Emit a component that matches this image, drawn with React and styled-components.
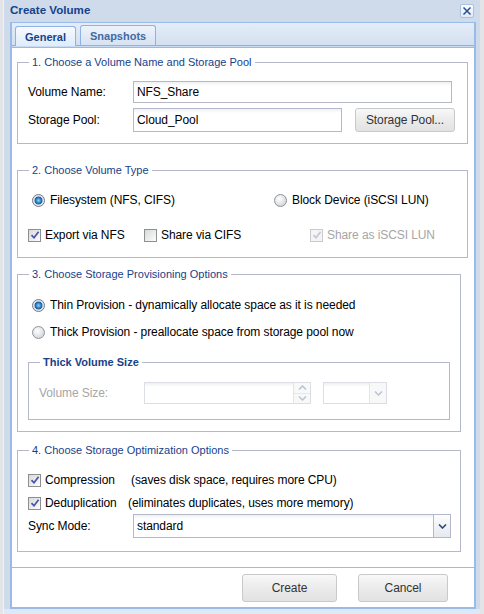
import styled, { createGlobalStyle } from 'styled-components';

const GlobalStyle = createGlobalStyle`
  html, body {
    margin: 0;
    padding: 0;
    background: #e2e4e7;
    overflow: hidden;
  }
  body {
    font-family: "Liberation Sans", Arial, sans-serif;
    font-size: 12px;
    letter-spacing: -0.08px;
    color: #000;
  }
  * { box-sizing: border-box; }
`;

const Window = styled.div`
  margin-left: 3px;
  width: 477px;
  height: 614px;
  display: flex;
  flex-direction: column;
  background: #cfdbea;
  border-left: 1px solid #eef3f9;
`;

const TitleBar = styled.div`
  height: 22px;
  flex: none;
  display: flex;
  align-items: center;
  justify-content: space-between;
  padding: 0 6px 4px 6px;
  font: bold 11.6px "Liberation Sans", Arial, sans-serif;
  letter-spacing: 0;
  color: #15428b;
`;

const CloseBtn = styled.div`
  width: 14px;
  height: 14px;
  margin-top: 3px;
  border: 1px solid #a9c2e2;
  border-radius: 2px;
  background: linear-gradient(#fbfdff, #dfe9f6);
  display: flex;
  align-items: center;
  justify-content: center;
`;

const Panel = styled.div`
  margin-left: 6px;
  width: 466px;
  flex: 1;
  display: flex;
  flex-direction: column;
  background: #fff;
  border-left: 2px solid #99bbe8;
  border-right: 2px solid #99bbe8;
`;

const TabStrip = styled.div`
  height: 23px;
  display: flex;
  align-items: flex-end;
  gap: 4px;
  padding-left: 3px;
  border-top: 1px solid #99bbe8;
  background: linear-gradient(#e4ecf7, #d3e0f1);
`;

const Tab = styled.div`
  height: 20px;
  padding: 0 9px;
  display: flex;
  align-items: center;
  border: 1px solid #8db2e3;
  border-bottom: none;
  border-radius: 3px 3px 0 0;
  font: bold 11px "Liberation Sans", Arial, sans-serif;
  letter-spacing: 0;
  color: ${p => (p.$active ? '#15428b' : '#416aa3')};
  background: ${p => (p.$active ? 'linear-gradient(#f7faff, #deecfd)' : 'linear-gradient(#eef3fb, #d6e3f3)')};
  position: relative;
  z-index: 1;
  margin-bottom: ${p => (p.$active ? '-1px' : '0')};
`;

const TabSpacer = styled.div`
  height: 3px;
  background: #c9dbf2;
  border-top: 1px solid #8db2e3;
  border-bottom: 1px solid #99bbe8;
`;

const Content = styled.div`
  flex: 1;
  display: flex;
  flex-direction: column;
  padding: 7px 6px 0 5px;
`;

const Group = styled.fieldset`
  margin: ${p => p.$mt || 0}px ${p => p.$mr || 0}px 0 0;
  padding: ${p => p.$pt || 0}px 10px ${p => p.$pb || 0}px 10px;
  border: 1px solid #b5b8c8;
  min-width: 0;
`;

const Legend = styled.legend`
  padding: 0 3px;
  margin-left: 1px;
  line-height: 14px;
  font-size: 11px;
  letter-spacing: 0;
  font-weight: ${p => (p.$bold ? 'bold' : 'normal')};
  color: #15428b;
`;

const Row = styled.div`
  display: flex;
  align-items: center;
  height: ${p => p.$h || 16}px;
  margin-top: ${p => p.$mt || 0}px;
  padding-left: ${p => p.$pl || 0}px;
`;

const Label = styled.span`
  width: ${p => p.$w || 105}px;
  flex: none;
  color: ${p => (p.$disabled ? '#a6a6a6' : '#000')};
`;

const TextField = styled.div`
  width: ${p => p.$w}px;
  height: ${p => p.$h || 22}px;
  flex: none;
  display: flex;
  align-items: center;
  padding: 0 3px;
  border: 1px solid ${p => (p.$disabled ? '#dcdee6' : '#b5b8c8')};
  background: linear-gradient(#eef0f2 0, #fff 4px);
  color: #000;
`;

const Btn = styled.div`
  width: ${p => p.$w}px;
  height: ${p => p.$h}px;
  flex: none;
  display: flex;
  align-items: center;
  justify-content: center;
  border: 1px solid #c9c9c9;
  border-radius: 3px;
  background: linear-gradient(#f8f8f8, #ececec 45%, #e2e2e2);
  color: #333;
  margin-left: ${p => p.$ml || 0}px;
`;

const Choice = styled.label`
  display: flex;
  align-items: center;
  gap: ${p => p.$gap || 4}px;
  width: ${p => (p.$w ? `${p.$w}px` : 'auto')};
  flex: none;
  color: ${p => (p.$disabled ? '#a6a6a6' : '#000')};
`;

const RadioDot = styled.span`
  width: 13px;
  height: 13px;
  flex: none;
  border-radius: 50%;
  border: 1px solid ${p => (p.$on ? '#6e7884' : '#8e949a')};
  background: ${p =>
    p.$on
      ? 'radial-gradient(circle at 50% 50%, #8fd3f8 0, #3a93d6 2px, #1c5c9c 3.6px, #d9dde2 4.3px, #f4f5f6 6px)'
      : 'radial-gradient(circle at 40% 35%, #ffffff, #d3d6d9 80%)'};
`;

const CheckBox = styled.span`
  width: 13px;
  height: 13px;
  flex: none;
  display: flex;
  align-items: center;
  justify-content: center;
  border: 1px solid ${p => (p.$disabled ? '#c9cacc' : '#8e8f8f')};
  background: ${p => (p.$disabled ? '#f4f4f4' : 'linear-gradient(135deg, #d8d9db, #fdfdfd)')};
`;

const Note = styled.span`
  margin-left: ${p => p.$ml || 0}px;
`;

const Combo = styled.div`
  width: ${p => p.$w}px;
  height: ${p => p.$h || 22}px;
  flex: none;
  display: flex;
  margin-left: ${p => p.$ml || 0}px;
  border: 1px solid ${p => (p.$disabled ? '#dcdee6' : '#b5b8c8')};
  background: linear-gradient(#eef0f2 0, #fff 4px);
`;

const ComboText = styled.div`
  flex: 1;
  display: flex;
  align-items: center;
  padding: 0 3px;
`;

const Trigger = styled.div`
  width: 17px;
  flex: none;
  display: flex;
  flex-direction: column;
  align-items: center;
  justify-content: center;
  border-left: 1px solid ${p => (p.$disabled ? '#e3e5ea' : '#b5b8c8')};
  background: ${p => (p.$disabled ? '#f8f8f8' : 'linear-gradient(#fdfdfd, #e6e9ee)')};
`;

const SpinHalf = styled.div`
  flex: 1;
  width: 100%;
  display: flex;
  align-items: center;
  justify-content: center;
  & + & { border-top: 1px solid #e6e8ec; }
`;

const Footer = styled.div`
  height: 42px;
  flex: none;
  display: flex;
  justify-content: flex-end;
  gap: 21px;
  padding: 6px 26px 0 0;
  border-top: 1px solid #99bbe8;
  border-bottom: 2px solid #99bbe8;
`;

const BottomBand = styled.div`
  height: 5px;
  flex: none;
  background: #dfe8f6;
`;

const Check = ({ color }) => (
  <svg width="10" height="10" viewBox="0 0 10 10">
    <path d="M1.5 5.2 L4 7.8 L8.6 1.8" fill="none" stroke={color} strokeWidth="1.7" />
  </svg>
);

const Chevron = ({ up, color }) => (
  <svg width="9" height="5" viewBox="0 0 9 5">
    <path d={up ? 'M1 4.5 L4.5 1 L8 4.5' : 'M1 0.5 L4.5 4 L8 0.5'} fill="none" stroke={color} strokeWidth="1.6" />
  </svg>
);

const Radio = ({ on, w, children }) => (
  <Choice $w={w} $gap={5}>
    <RadioDot $on={on} />
    {children}
  </Choice>
);

const CheckItem = ({ on, disabled, w, children }) => (
  <Choice $w={w} $disabled={disabled}>
    <CheckBox $disabled={disabled}>{on && <Check color={disabled ? '#c3c7d2' : '#4753a8'} />}</CheckBox>
    {children}
  </Choice>
);

const App = () => {
  return (
    <>
      <GlobalStyle />
      <Window>
        <TitleBar>
          <span>Create Volume</span>
          <CloseBtn>
            <svg width="10" height="10" viewBox="0 0 10 10">
              <path d="M1.5 1.5 L8.5 8.5 M8.5 1.5 L1.5 8.5" stroke="#2b4f8c" strokeWidth="1.5" />
            </svg>
          </CloseBtn>
        </TitleBar>
        <Panel>
          <TabStrip>
            <Tab $active>General</Tab>
            <Tab>Snapshots</Tab>
          </TabStrip>
          <TabSpacer />
          <Content>
            <Group $pt={12} $pb={11}>
              <Legend>1. Choose a Volume Name and Storage Pool</Legend>
              <Row $h={22}>
                <Label>Volume Name:</Label>
                <TextField $w={319}>NFS_Share</TextField>
              </Row>
              <Row $h={24} $mt={5}>
                <Label>Storage Pool:</Label>
                <TextField $w={209} $h={24}>Cloud_Pool</TextField>
                <Btn $w={100} $h={24} $ml={13}>Storage Pool...</Btn>
              </Row>
            </Group>

            <Group $mt={19} $pt={15} $pb={14}>
              <Legend>2. Choose Volume Type</Legend>
              <Row $pl={4}>
                <Radio on w={242}>Filesystem (NFS, CIFS)</Radio>
                <Radio>Block Device (iSCSI LUN)</Radio>
              </Row>
              <Row $mt={19}>
                <CheckItem on w={116}>Export via NFS</CheckItem>
                <CheckItem w={166}>Share via CIFS</CheckItem>
                <CheckItem on disabled>Share as iSCSI LUN</CheckItem>
              </Row>
            </Group>

            <Group $mt={9} $mr={7} $pt={16} $pb={11}>
              <Legend>3. Choose Storage Provisioning Options</Legend>
              <Row $pl={4}>
                <Radio on>Thin Provision - dynamically allocate space as it is needed</Radio>
              </Row>
              <Row $pl={4} $mt={11}>
                <Radio>Thick Provision - preallocate space from storage pool now</Radio>
              </Row>
              <Group $mt={15} $pt={13} $pb={15}>
                <Legend $bold>Thick Volume Size</Legend>
                <Row $h={22}>
                  <Label $disabled>Volume Size:</Label>
                  <Combo $w={167} $disabled>
                    <ComboText />
                    <Trigger $disabled>
                      <SpinHalf><Chevron up color="#b9c6d8" /></SpinHalf>
                      <SpinHalf><Chevron color="#b9c6d8" /></SpinHalf>
                    </Trigger>
                  </Combo>
                  <Combo $w={64} $ml={12} $disabled>
                    <ComboText />
                    <Trigger $disabled>
                      <Chevron color="#b9c6d8" />
                    </Trigger>
                  </Combo>
                </Row>
              </Group>
            </Group>

            <Group $mt={11} $mr={7} $pt={15} $pb={13}>
              <Legend>4. Choose Storage Optimization Options</Legend>
              <Row>
                <CheckItem on w={103}>Compression</CheckItem>
                <Note>(saves disk space, requires more CPU)</Note>
              </Row>
              <Row $mt={7}>
                <CheckItem on w={100}>Deduplication</CheckItem>
                <Note>(eliminates duplicates, uses more memory)</Note>
              </Row>
              <Row $h={24} $mt={3}>
                <Label>Sync Mode:</Label>
                <Combo $w={318} $h={24}>
                  <ComboText>standard</ComboText>
                  <Trigger>
                    <Chevron color="#2d4a80" />
                  </Trigger>
                </Combo>
              </Row>
            </Group>
          </Content>
          <Footer>
            <Btn $w={95} $h={28}>Create</Btn>
            <Btn $w={90} $h={28}>Cancel</Btn>
          </Footer>
        </Panel>
        <BottomBand />
      </Window>
    </>
  );
};

export default App;
